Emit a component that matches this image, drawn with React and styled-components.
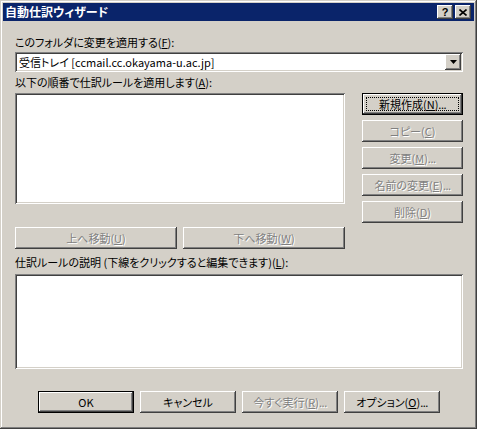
import React from 'react';
import styled, { createGlobalStyle, css } from 'styled-components';

const GlobalStyle = createGlobalStyle`
  html, body {
    margin: 0;
    padding: 0;
    background: #d4d0c8;
  }
  body {
    font-family: "Noto Sans CJK JP", "Liberation Sans", sans-serif;
    font-size: 11px;
    font-feature-settings: "palt";
    -webkit-font-smoothing: none;
  }
`;

const raised = css`
  box-shadow: inset -1px -1px #404040, inset 1px 1px #ffffff,
    inset -2px -2px #808080, inset 2px 2px #d4d0c8;
`;

const sunken = css`
  box-shadow: inset 1px 1px #808080, inset -1px -1px #ffffff,
    inset 2px 2px #404040, inset -2px -2px #d4d0c8;
`;

const Window = styled.div`
  width: 477px;
  height: 429px;
  box-sizing: border-box;
  padding: 3px;
  background: #d4d0c8;
  box-shadow: inset -1px -1px #404040, inset 1px 1px #d4d0c8,
    inset -2px -2px #808080, inset 2px 2px #ffffff;
  display: flex;
  flex-direction: column;
`;

const TitleBar = styled.div`
  height: 18px;
  background: #0a246a;
  display: flex;
  align-items: center;
  padding: 0 3px 0 2px;
`;

const TitleText = styled.div`
  flex: 1;
  color: #ffffff;
  font-weight: bold;
  font-size: 12px;
  line-height: 18px;
`;

const CaptionButton = styled.div`
  width: 16px;
  height: 14px;
  box-sizing: border-box;
  background: #d4d0c8;
  ${raised};
  display: flex;
  align-items: center;
  justify-content: center;
  margin-left: ${(p) => (p.$gap ? '2px' : '0')};
  font-family: "Liberation Sans", sans-serif;
  font-weight: bold;
  font-size: 11px;
  color: #000;
`;

const Content = styled.div`
  display: flex;
  flex-direction: column;
  padding: 0 11px 0 12px;
`;

const Label = styled.div`
  height: 13px;
  line-height: 13px;
  color: #000;
  margin-top: ${(p) => p.$top}px;
  white-space: nowrap;
`;

const Combo = styled.div`
  margin-top: 3px;
  height: 20px;
  background: #ffffff;
  box-sizing: border-box;
  ${sunken};
  display: flex;
  align-items: center;
  padding: 2px 2px 2px 4px;
`;

const ComboText = styled.div`
  flex: 1;
  line-height: 16px;
  white-space: nowrap;
`;

const DropButton = styled.div`
  width: 16px;
  height: 16px;
  box-sizing: border-box;
  background: #d4d0c8;
  ${raised};
  display: flex;
  align-items: center;
  justify-content: center;
`;

const Middle = styled.div`
  margin-top: 4px;
  display: grid;
  grid-template-columns: 330px 101px;
  column-gap: 17px;
  align-items: start;
`;

const LeftCol = styled.div`
  display: flex;
  flex-direction: column;
`;

const Field = styled.div`
  background: #ffffff;
  height: ${(p) => p.$h}px;
  margin-top: ${(p) => p.$top || 0}px;
  ${sunken};
`;

const MoveRow = styled.div`
  margin-top: 23px;
  display: flex;
  gap: 6px;
`;

const SideCol = styled.div`
  display: flex;
  flex-direction: column;
  gap: 5px;
`;

const Button = styled.div`
  position: relative;
  height: ${(p) => p.$h || 22}px;
  width: ${(p) => (p.$w ? `${p.$w}px` : 'auto')};
  flex: ${(p) => (p.$grow ? '1 1 0' : '0 0 auto')};
  box-sizing: border-box;
  background: #d4d0c8;
  display: flex;
  align-items: center;
  justify-content: center;
  white-space: nowrap;
  line-height: 13px;
  color: ${(p) => (p.$disabled ? '#808080' : '#000000')};
  text-shadow: ${(p) => (p.$disabled ? '1px 1px 0 #ffffff' : 'none')};
  ${(p) =>
    p.$default
      ? css`
          box-shadow: inset 0 0 0 1px #000000, inset -2px -2px #404040,
            inset 2px 2px #ffffff, inset -3px -3px #808080;
        `
      : raised};
  ${(p) =>
    p.$focus &&
    css`
      &::after {
        content: '';
        position: absolute;
        inset: 4px;
        border: 1px dotted #000000;
      }
    `}
`;

const Footer = styled.div`
  margin-top: 22px;
  display: flex;
  gap: 6px;
  padding-left: 23px;
`;

const Dots = styled.span`
  letter-spacing: -0.5px;
`;

const App = () => (
  <>
    <GlobalStyle />
    <Window>
      <TitleBar>
        <TitleText>自動仕訳ウィザード</TitleText>
        <CaptionButton>?</CaptionButton>
        <CaptionButton $gap>
          <svg width="8" height="7" viewBox="0 0 8 7">
            <path d="M0.5 0.5 L7.5 6.5 M7.5 0.5 L0.5 6.5" stroke="#000" strokeWidth="1.6" />
          </svg>
        </CaptionButton>
      </TitleBar>
      <Content>
        <Label $top={15}>
          このフォルダに変更を適用する(<u>F</u>):
        </Label>
        <Combo>
          <ComboText>受信トレイ [ccmail.cc.okayama-u.ac.jp]</ComboText>
          <DropButton>
            <svg width="7" height="4" viewBox="0 0 7 4">
              <path d="M0 0 H7 L3.5 4 Z" fill="#000" />
            </svg>
          </DropButton>
        </Combo>
        <Label $top={4}>
          以下の順番で仕訳ルールを適用します(<u>A</u>):
        </Label>
        <Middle>
          <LeftCol>
            <Field $h={111} />
            <MoveRow>
              <Button $grow $disabled>
                上へ移動(<u>U</u>)
              </Button>
              <Button $grow $disabled>
                下へ移動(<u>W</u>)
              </Button>
            </MoveRow>
          </LeftCol>
          <SideCol>
            <Button $default $focus>
              新規作成(<u>N</u>)<Dots>...</Dots>
            </Button>
            <Button $disabled>
              コピー(<u>C</u>)
            </Button>
            <Button $disabled>
              変更(<u>M</u>)<Dots>...</Dots>
            </Button>
            <Button $disabled>
              名前の変更(<u>E</u>)<Dots>...</Dots>
            </Button>
            <Button $disabled>
              削除(<u>D</u>)
            </Button>
          </SideCol>
        </Middle>
        <Label $top={7}>
          仕訳ルールの説明 (下線をクリックすると編集できます)(<u>L</u>):
        </Label>
        <Field $h={95} $top={5} />
        <Footer>
          <Button $w={96} $default>
            OK
          </Button>
          <Button $w={96}>キャンセル</Button>
          <Button $w={96} $disabled>
            今すぐ実行(<u>R</u>)<Dots>...</Dots>
          </Button>
          <Button $w={96}>
            オプション(<u>O</u>)<Dots>...</Dots>
          </Button>
        </Footer>
      </Content>
    </Window>
  </>
);

export default App;
